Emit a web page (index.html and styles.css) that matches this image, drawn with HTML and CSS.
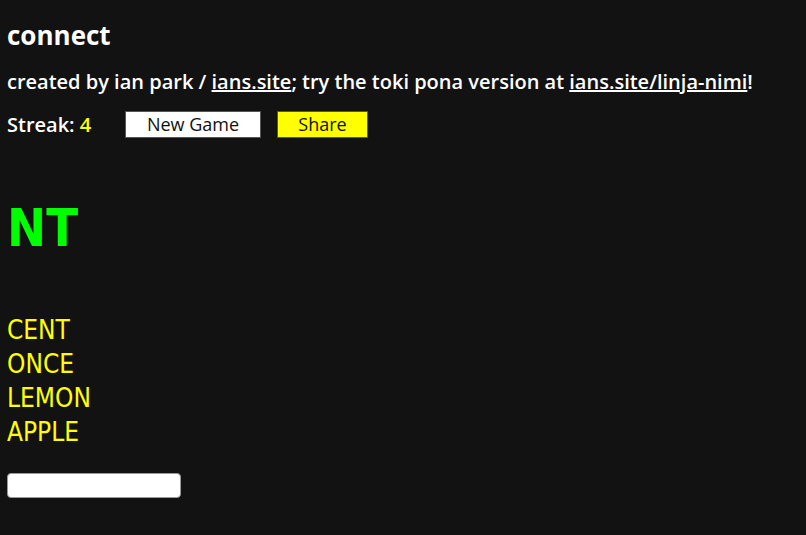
FILE: index.html
```html
<!DOCTYPE html>
<html>
<head>
<meta charset="utf-8">
<link rel="stylesheet" href="styles.css">
</head>
<body>
<main class="page">
  <h1 class="title">connect</h1>
  <p class="credits">created by ian park / <a href="#">ians.site</a>; try the toki pona version at <a href="#">ians.site/linja-nimi</a>!</p>
  <div class="controls">
    <span class="streak">Streak: <span class="streak-num">4</span></span>
    <button class="btn btn-new">New Game</button>
    <button class="btn btn-share">Share</button>
  </div>
  <div class="letters">NT</div>
  <ul class="words">
    <li>CENT</li>
    <li>ONCE</li>
    <li>LEMON</li>
    <li>APPLE</li>
  </ul>
  <input class="guess" type="text">
</main>
</body>
</html>
```
FILE: styles.css
```css
html, body {
  margin: 0;
  background: #121212;
  color: #ffffff;
}
.page {
  padding: 0 7px;
  font-family: "Open Sans", "DejaVu Sans", sans-serif;
}
.title {
  margin: 0;
  padding-top: 18px;
  font-size: 26px;
  font-weight: 700;
  line-height: 34px;
}
.credits {
  margin: 0;
  padding-top: 13px;
  font-size: 20px;
  font-weight: 600;
  line-height: 34px;
}
.credits a {
  color: #ffffff;
}
.controls {
  display: flex;
  align-items: center;
  margin-top: 12px;
  height: 27px;
}
.streak {
  font-size: 20px;
  font-weight: 600;
  width: 118px;
}
.streak-num {
  color: #ffff00;
  font-weight: 600;
}
.btn {
  height: 27px;
  padding: 0;
  border: 1px solid #555;
  font-family: "Open Sans", sans-serif;
  font-size: 18px;
  color: #111;
  line-height: 25px;
}
.btn-new {
  width: 136px;
  background: #ffffff;
  margin-right: 16px;
}
.btn-share {
  width: 91px;
  background: #ffff00;
}
.letters {
  margin-top: 55px;
  font-family: "DejaVu Sans Condensed", "DejaVu Sans", sans-serif;
  font-weight: 700;
  font-size: 52px;
  line-height: 70px;
  color: #00ff00;
}
.words {
  list-style: none;
  margin: 0;
  padding: 0;
  margin-top: 50px;
  font-family: "DejaVu Sans Condensed", "DejaVu Sans", sans-serif;
  font-size: 26px;
  line-height: 34px;
  color: #ffff00;
}
.guess {
  display: block;
  margin-top: 24px;
  width: 174px;
  height: 25px;
  box-sizing: border-box;
  border: 1px solid #999;
  border-radius: 4px;
  background: #fff;
}
```
